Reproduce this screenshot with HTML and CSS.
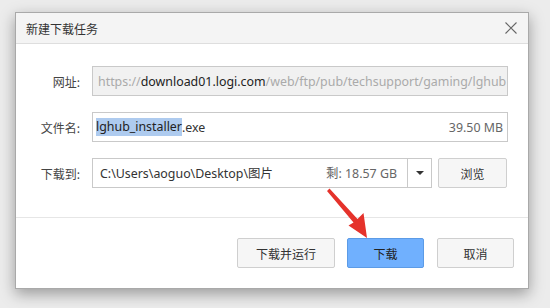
FILE: index.html
```html
<!DOCTYPE html>
<html lang="zh-CN">
<head>
<meta charset="utf-8">
<title>新建下载任务</title>
<link rel="stylesheet" href="styles.css">
</head>
<body>
<div class="dialog">
  <div class="titlebar">
    <span class="title">新建下载任务</span>
    <svg class="close" width="12" height="12" viewBox="0 0 12 12"><path d="M0.5 0.5 L11.5 11.5 M11.5 0.5 L0.5 11.5" stroke="#666" stroke-width="1.1" fill="none"/></svg>
  </div>
  <div class="content">
    <div class="row">
      <label class="label">网址:</label>
      <div class="field field-disabled"><span class="muted">https://</span><span class="strong">download01.logi.com</span><span class="muted">/web/ftp/pub/techsupport/gaming/lghub</span></div>
    </div>
    <div class="row">
      <label class="label">文件名:</label>
      <div class="field"><span class="sel">lghub_installer</span><span>.exe</span><span class="size">39.50 MB</span></div>
    </div>
    <div class="row">
      <label class="label">下载到:</label>
      <div class="combo">
        <div class="combo-text"><span>C:\Users\aoguo\Desktop\图片</span><span class="free">剩: 18.57 GB</span></div>
        <div class="combo-btn"><span class="caret"></span></div>
      </div>
      <button class="btn btn-browse">浏览</button>
    </div>
  </div>
  <div class="footer">
    <button class="btn btn-run">下载并运行</button>
    <button class="btn btn-primary">下载</button>
    <button class="btn btn-cancel">取消</button>
  </div>
</div>
<svg class="arrow" width="550" height="308" viewBox="0 0 550 308">
  <polygon points="327,191 329.5,188.5 357.5,219 363.5,213 367,238 348.5,225.5 353.5,222.5" fill="#e5322b"/>
</svg>
</body>
</html>
```

FILE: styles.css
```css
html, body {
  margin: 0;
  padding: 0;
}
body {
  width: 550px;
  height: 308px;
  background: #ececec;
  padding: 12px 0 0 15px;
  box-sizing: border-box;
  font-family: "Noto Sans", "Noto Sans CJK SC", sans-serif;
  font-size: 12.4px;
  color: #333;
  position: relative;
  overflow: hidden;
}
.dialog {
  width: 514px;
  height: 277px;
  box-sizing: border-box;
  border: 1px solid #a9a9a9;
  background: #fff;
  box-shadow: 0 5px 14px rgba(0,0,0,0.35);
  display: flex;
  flex-direction: column;
}
.titlebar {
  height: 30px;
  background: #f4f4f4;
  border-bottom: 1px solid #dedede;
  display: flex;
  align-items: center;
  justify-content: space-between;
  padding: 0 11px 0 10px;
  flex: none;
}
.title {
  font-family: "Noto Sans CJK SC", sans-serif;
  font-size: 12px;
  color: #333;
}
.close {
  display: block;
}
.content {
  padding: 22px 20px 0 0;
  display: flex;
  flex-direction: column;
  gap: 16px;
  height: 173px;
  box-sizing: border-box;
  flex: none;
}
.row {
  display: flex;
  align-items: center;
  height: 30px;
}
.label {
  width: 64px;
  margin-right: 12px;
  text-align: right;
  font-family: "Noto Sans CJK SC", sans-serif;
  font-size: 12px;
  color: #444;
  flex: none;
}
.field {
  flex: 1;
  height: 30px;
  box-sizing: border-box;
  border: 1px solid #c9c9c9;
  display: flex;
  align-items: center;
  padding: 0 4px 0 3px;
  white-space: nowrap;
  overflow: hidden;
  color: #333;
}
.field-disabled {
  background: #f1f1f1;
  padding-left: 5px;
}
.muted {
  color: #aaa;
}
.strong {
  color: #222;
}
.sel {
  background: #aecbef;
  color: #222;
  line-height: 18px;
}
.size {
  margin-left: auto;
  color: #666;
}
.combo {
  width: 340px;
  height: 30px;
  box-sizing: border-box;
  border: 1px solid #c9c9c9;
  display: flex;
  flex: none;
}
.combo-text {
  flex: 1;
  display: flex;
  align-items: center;
  padding: 0 10px 0 7px;
  white-space: nowrap;
}
.free {
  margin-left: auto;
  color: #666;
}
.combo-btn {
  width: 23px;
  border-left: 1px solid #c9c9c9;
  display: flex;
  align-items: center;
  justify-content: center;
}
.caret {
  width: 0;
  height: 0;
  border-left: 4px solid transparent;
  border-right: 4px solid transparent;
  border-top: 4px solid #333;
}
.btn {
  font-family: "Noto Sans CJK SC", sans-serif;
  font-size: 12px;
  color: #333;
  background: #f6f6f6;
  border: 1px solid #cfcfcf;
  border-radius: 2px;
  height: 30px;
  padding: 0;
  flex: none;
}
.btn-browse {
  width: 69px;
  margin-left: 6px;
}
.footer {
  border-top: 1px solid #e6e6e6;
  margin-top: 0;
  padding: 20px 14px 0 0;
  display: flex;
  justify-content: flex-end;
  gap: 12px;
}
.btn-run {
  width: 98px;
}
.btn-primary {
  width: 77px;
  background: #70b0fe;
  border-color: #5c9be6;
  color: #222;
}
.btn-cancel {
  width: 77px;
  margin-left: 1px;
}
.arrow {
  position: absolute;
  left: 0;
  top: 0;
  pointer-events: none;
}
```
